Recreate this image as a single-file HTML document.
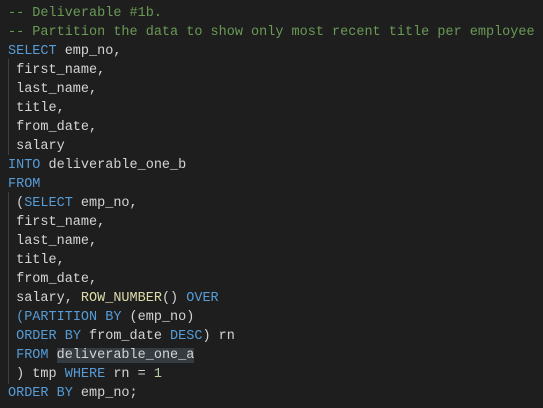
<html><head><style>
body{margin:0;background:#1e1e1e;width:543px;height:408px;overflow:hidden;position:relative}
pre{margin:0;position:absolute;left:8px;top:4px;font-family:"Liberation Mono",monospace;font-size:13.5px;line-height:19px;color:#d4d4d4}
.c{color:#6a9955}.k{color:#569cd6}.f{color:#dcdcaa}.n{color:#b5cea8}
.h{background:#343b41}
.g{position:absolute;left:8px;width:1px;background:#404040}
</style></head><body>
<div class="g" style="top:59px;height:96px"></div>
<div class="g" style="top:192px;height:192px"></div>
<pre><span class="c">-- Deliverable #1b.</span>
<span class="c">-- Partition the data to show only most recent title per employee</span>
<span class="k">SELECT</span> emp_no,
 first_name,
 last_name,
 title,
 from_date,
 salary
<span class="k">INTO</span> deliverable_one_b
<span class="k">FROM</span>
 (<span class="k">SELECT</span> emp_no,
 first_name,
 last_name,
 title,
 from_date,
 salary, <span class="f">ROW_NUMBER</span>() <span class="k">OVER</span>
 <span class="k">(PARTITION BY</span> (emp_no)
 <span class="k">ORDER BY</span> from_date <span class="k">DESC</span>) rn
 <span class="k">FROM</span> <span class="h">deliverable_one_a</span>
 ) tmp <span class="k">WHERE</span> rn = <span class="n">1</span>
<span class="k">ORDER BY</span> emp_no;</pre>
</body></html>
